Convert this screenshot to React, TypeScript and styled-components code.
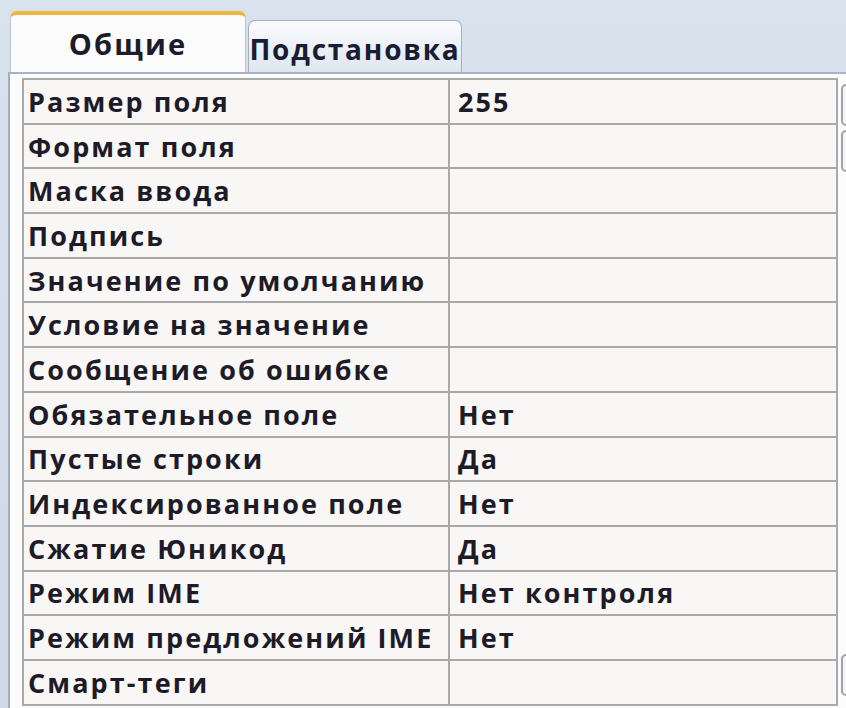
import React from 'react';
import styled, { createGlobalStyle } from 'styled-components';

const GlobalStyle = createGlobalStyle`
  html, body {
    margin: 0;
    padding: 0;
    background: #d3dde9;
  }
`;

// Field properties shown on the "Общие" tab
const properties: [string, string][] = [
  ['Размер поля', '255'],
  ['Формат поля', ''],
  ['Маска ввода', ''],
  ['Подпись', ''],
  ['Значение по умолчанию', ''],
  ['Условие на значение', ''],
  ['Сообщение об ошибке', ''],
  ['Обязательное поле', 'Нет'],
  ['Пустые строки', 'Да'],
  ['Индексированное поле', 'Нет'],
  ['Сжатие Юникод', 'Да'],
  ['Режим IME', 'Нет контроля'],
  ['Режим предложений IME', 'Нет'],
  ['Смарт-теги', ''],
];

const Window = styled.div`
  width: 846px;
  height: 708px;
  overflow: hidden;
  display: flex;
  flex-direction: column;
  background: linear-gradient(#d9e3ee, #cfdae6);
  padding-left: 8px;
  box-sizing: border-box;
  font-family: "Open Sans", "DejaVu Sans", sans-serif;
  color: #1e1b28;
`;

const TabBar = styled.div`
  height: 72px;
  flex-shrink: 0;
  display: flex;
  align-items: flex-end;
  gap: 2px;
  padding-left: 2px;
`;

const Tab = styled.div<{ $active?: boolean }>`
  box-sizing: border-box;
  display: flex;
  justify-content: center;
  font-weight: 700;
  font-size: 28px;
  letter-spacing: 1.8px;
  white-space: nowrap;
  border-radius: 7px 7px 0 0;
  ${(p) =>
    p.$active
      ? `
    width: 236px;
    height: 62px;
    padding-top: 9px;
    font-size: 29px;
    letter-spacing: 2.2px;
    background: #fbfbfb;
    border-top: 4px solid #f0b53c;
    border-left: 1px solid #b8c2cc;
    border-right: 1px solid #b8c2cc;
    margin-bottom: -2px;
    height: 63px;
  `
      : `
    width: 214px;
    height: 52px;
    padding-top: 9px;
    background: linear-gradient(#fafbfd, #dfe6ef);
    border: 1px solid #a5b0bc;
    border-bottom: none;
    color: #1a1c33;
  `}
`;

const Panel = styled.div`
  flex: 1;
  display: flex;
  gap: 3px;
  background: #fbfbfb;
  border-left: 2px solid #9fadbd;
  border-top: 2px solid #a8b4c2;
  padding: 4px 0 0 12px;
`;

const Grid = styled.div`
  width: 814px;
  flex-shrink: 0;
  display: grid;
  grid-template-columns: 426px 1fr;
  border-top: 2px solid #a9a9a9;
  border-left: 2px solid #a9a9a9;
  align-self: flex-start;
`;

const Cell = styled.div<{ $value?: boolean }>`
  box-sizing: border-box;
  height: 44.7px;
  display: flex;
  align-items: center;
  padding-left: ${(p) => (p.$value ? '8px' : '4px')};
  background: #f8f7f5;
  border-right: 2px solid #a9a9a9;
  border-bottom: 2px solid #a9a9a9;
  font-size: 27px;
  font-weight: 700;
  letter-spacing: 2.1px;
  white-space: nowrap;
  overflow: hidden;
`;

const SideColumn = styled.div`
  display: flex;
  flex-direction: column;
  gap: 4px;
  padding-top: 6px;
`;

const SideButton = styled.div<{ $gapBefore?: number }>`
  width: 14px;
  height: 42px;
  box-sizing: border-box;
  border: 2px solid #a0a4aa;
  border-radius: 5px;
  background: #f4f5f7;
  margin-top: ${(p) => p.$gapBefore ?? 0}px;
`;

export default function App() {
  return (
    <>
      <GlobalStyle />
      <Window>
        <TabBar>
          <Tab $active>Общие</Tab>
          <Tab>Подстановка</Tab>
        </TabBar>
        <Panel>
          <Grid>
            {properties.map(([name, value]) => (
              <React.Fragment key={name}>
                <Cell>{name}</Cell>
                <Cell $value>{value}</Cell>
              </React.Fragment>
            ))}
          </Grid>
          <SideColumn>
            <SideButton />
            <SideButton />
            <SideButton $gapBefore={478} />
          </SideColumn>
        </Panel>
      </Window>
    </>
  );
}
